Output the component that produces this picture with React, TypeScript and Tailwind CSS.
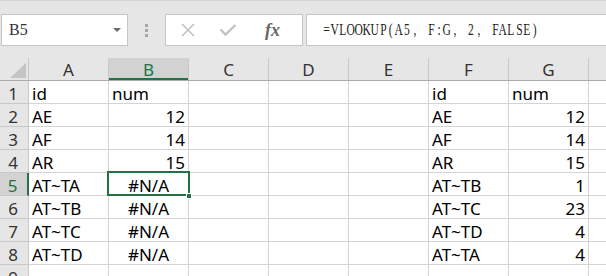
import React from "react";

const cols = ["A", "B", "C", "D", "E", "F", "G", "H"];

const rows: string[][] = [
  ["id", "num", "", "", "", "id", "num", ""],
  ["AE", "12", "", "", "", "AE", "12", ""],
  ["AF", "14", "", "", "", "AF", "14", ""],
  ["AR", "15", "", "", "", "AR", "15", ""],
  ["AT~TA", "#N/A", "", "", "", "AT~TB", "1", ""],
  ["AT~TB", "#N/A", "", "", "", "AT~TC", "23", ""],
  ["AT~TC", "#N/A", "", "", "", "AT~TD", "4", ""],
  ["AT~TD", "#N/A", "", "", "", "AT~TA", "4", ""],
  ["", "", "", "", "", "", "", ""],
];

const formula = "=VLOOKUP(A5, F:G, 2, FALSE)";

const align = (v: string) => {
  if (v === "#N/A") return "justify-center";
  if (/^\d+$/.test(v)) return "justify-end pr-[3px]";
  return "justify-start pl-[3px]";
};

const Toolbar = () => (
  <div className="h-[58px] bg-[#e6e6e6] border-t border-[#d4d4d4] flex items-start pt-[13px]">
    <div className="ml-[1px] w-[127px] h-[32px] shrink-0 bg-white border border-[#c6c6c6] flex items-center justify-between pl-[7px] pr-[6px]">
      <span className="text-[16px] text-[#333] font-['Liberation_Serif',serif]">B5</span>
      <svg width="8" height="4" viewBox="0 0 8 4">
        <path d="M0 0 H8 L4 4 Z" fill="#6b6b6b" />
      </svg>
    </div>
    <div className="w-[37px] h-[32px] shrink-0 flex flex-col items-center justify-center gap-[2px]">
      <span className="w-[3px] h-[3px] bg-[#a6a6a6]" />
      <span className="w-[3px] h-[3px] bg-[#a6a6a6]" />
      <span className="w-[3px] h-[3px] bg-[#a6a6a6]" />
    </div>
    <div className="w-[138px] h-[32px] shrink-0 bg-white border border-[#c6c6c6] flex items-center">
      <svg className="ml-[14px]" width="16" height="16" viewBox="0 0 16 16">
        <path d="M2 2 L14 14 M14 2 L2 14" stroke="#c2c2c2" strokeWidth="1.6" />
      </svg>
      <svg className="ml-[23px]" width="18" height="14" viewBox="0 0 18 14">
        <path d="M1.5 6.5 L6.5 11.5 L16.5 2" stroke="#c2c2c2" strokeWidth="2.4" fill="none" />
      </svg>
      <span className="ml-[28px] text-[18px] italic font-bold text-[#666] font-['Liberation_Serif',serif] leading-none">
        fx
      </span>
    </div>
    <div className="ml-[3px] w-[320px] h-[32px] shrink-0 bg-white border border-[#c6c6c6] flex items-center pl-[16px]">
      <span className="flex text-[16px] text-[#222] font-['Liberation_Serif',serif]">
        {formula.split("").map((c, i) => (
          <span key={i} className="w-[8px] flex justify-center whitespace-pre">
            <span className="inline-block scale-x-[0.72]">{c}</span>
          </span>
        ))}
      </span>
    </div>
  </div>
);

const Grid = () => (
  <div className="relative font-['Noto_Sans',sans-serif] text-[17px]">
    <div className="flex h-[23px] bg-[#e6e6e6] border-b border-[#ababab]">
      <div className="w-[29px] shrink-0 border-r border-[#c8c8c8] flex items-end justify-end pr-[2px] pb-[2px]">
        <svg width="16" height="15" viewBox="0 0 16 15">
          <path d="M16 0 V15 H0 Z" fill="#c4c4c4" />
        </svg>
      </div>
      {cols.map((c) => (
        <div
          key={c}
          className={
            c === "B"
              ? "w-[80px] shrink-0 border-r border-[#c8c8c8] bg-[#d2d2d2] text-[#217346] flex justify-center leading-[24px] shadow-[inset_0_-2px_0_#217346]"
              : "w-[80px] shrink-0 border-r border-[#c8c8c8] text-[#333] flex justify-center leading-[24px]"
          }
        >
          {c}
        </div>
      ))}
    </div>
    {rows.map((r, i) => (
      <div key={i} className="flex h-[23px]">
        <div
          className={
            i === 4
              ? "w-[29px] shrink-0 border-b border-r-2 border-[#c8c8c8] border-r-[#217346] bg-[#d2d2d2] text-[#217346] flex justify-center leading-[26px] pr-[2px]"
              : "w-[29px] shrink-0 border-b border-r border-[#c8c8c8] bg-[#e6e6e6] text-[#333] flex justify-center leading-[26px] pr-[2px]"
          }
        >
          {i + 1}
        </div>
        {r.map((v, j) => (
          <div
            key={j}
            className={`w-[80px] shrink-0 border-b border-r border-[#d4d4d4] flex whitespace-nowrap leading-[26px] text-black ${align(v)}`}
          >
            {v}
          </div>
        ))}
      </div>
    ))}
    <div className="absolute left-[107px] top-[113px] w-[83px] h-[25px] border-2 border-[#217346] pointer-events-none" />
    <div className="absolute left-[186px] top-[135px] w-[6px] h-[6px] bg-[#217346] border border-white" />
  </div>
);

export default function App() {
  return (
    <div className="w-[606px] h-[276px] overflow-hidden bg-white">
      <Toolbar />
      <Grid />
    </div>
  );
}
